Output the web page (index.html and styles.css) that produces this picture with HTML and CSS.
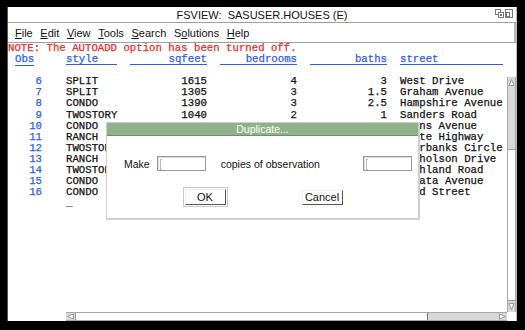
FILE: index.html
```html
<!DOCTYPE html>
<html lang="en">
<head>
    <meta charset="UTF-8">
    <title>FSVIEW: SASUSER.HOUSES (E)</title>
    <link rel="stylesheet" href="styles.css">
</head>
<body>
    <div class="window">
        <div class="titlebar">
            <span></span>
            <span class="title">FSVIEW:&nbsp; SASUSER.HOUSES (E)</span>
            <span class="win-btns">
                <svg width="9" height="9" viewBox="0 0 9 9"><rect x="0.5" y="0.5" width="5" height="5" fill="none" stroke="#777"/><rect x="3.5" y="3.5" width="5" height="5" fill="#fff" stroke="#777"/><rect x="5" y="5" width="2" height="2" fill="#777"/></svg>
                <svg width="8" height="9" viewBox="0 0 8 9"><rect x="0.5" y="0.5" width="7" height="8" fill="none" stroke="#777"/><rect x="1.5" y="3.5" width="3" height="4" fill="none" stroke="#777"/></svg>
            </span>
        </div>
        <div class="menubar">
            <span><u>F</u>ile</span>
            <span><u>E</u>dit</span>
            <span><u>V</u>iew</span>
            <span><u>T</u>ools</span>
            <span><u>S</u>earch</span>
            <span>S<u>o</u>lutions</span>
            <span><u>H</u>elp</span>
        </div>
        <div class="content">
            <div class="main">
                <div class="sheet">
                    <div class="note">NOTE: The AUTOADD option has been turned off.</div>
                    <div class="grid">
                        <div class="hd obs-hd"><span>Obs</span></div>
                        <div class="hd col">style</div>
                        <div class="hd col num">sqfeet</div>
                        <div class="hd col num">bedrooms</div>
                        <div class="hd col num">baths</div>
                        <div class="hd col">street</div>

                        <div class="blank"></div>

                        <div class="obs">6</div><div>SPLIT</div><div class="num">1615</div><div class="num">4</div><div class="num">3</div><div>West Drive</div>
                        <div class="obs">7</div><div>SPLIT</div><div class="num">1305</div><div class="num">3</div><div class="num">1.5</div><div>Graham Avenue</div>
                        <div class="obs">8</div><div>CONDO</div><div class="num">1390</div><div class="num">3</div><div class="num">2.5</div><div>Hampshire Avenue</div>
                        <div class="obs">9</div><div>TWOSTORY</div><div class="num">1040</div><div class="num">2</div><div class="num">1</div><div>Sanders Road</div>
                        <div class="obs">10</div><div>CONDO</div><div class="num">2105</div><div class="num">4</div><div class="num">2.5</div><div>Jeans Avenue</div>
                        <div class="obs">11</div><div>RANCH</div><div class="num">1535</div><div class="num">3</div><div class="num">3</div><div>State Highway</div>
                        <div class="obs">12</div><div>TWOSTORY</div><div class="num">1240</div><div class="num">2</div><div class="num">2</div><div>Fairbanks Circle</div>
                        <div class="obs">13</div><div>RANCH</div><div class="num">720</div><div class="num">1</div><div class="num">1</div><div>Nicholson Drive</div>
                        <div class="obs">14</div><div>TWOSTORY</div><div class="num">1745</div><div class="num">4</div><div class="num">2.5</div><div>Highland Road</div>
                        <div class="obs">15</div><div>CONDO</div><div class="num">1860</div><div class="num">2</div><div class="num">2</div><div>Arcata Avenue</div>
                        <div class="obs">16</div><div>CONDO</div><div class="num">1200</div><div class="num">1</div><div class="num">1</div><div>Rand Street</div>

                        <div class="obs"></div><div class="cursor">_</div>
                    </div>
                </div>
                <div class="vscroll">
                    <div class="arrow"><svg width="7" height="9" viewBox="0 0 7 9"><path d="M3.5 1.5 L6 7.5 L1 7.5 Z" fill="#fff" stroke="#999"/></svg></div>
                    <div class="v-track"><div class="v-thumb"></div></div>
                    <div class="arrow"><svg width="7" height="9" viewBox="0 0 7 9"><path d="M1 1.5 L6 1.5 L3.5 7.5 Z" fill="#fff" stroke="#999"/></svg></div>
                </div>
            </div>
            <div class="hscroll-row">
                <div class="hscroll">
                    <div class="arrow"><svg width="9" height="7" viewBox="0 0 9 7"><path d="M1.5 3.5 L7.5 1 L7.5 6 Z" fill="#fff" stroke="#999"/></svg></div>
                    <div class="h-thumb"></div>
                    <div class="h-track"></div>
                    <div class="arrow"><svg width="9" height="7" viewBox="0 0 9 7"><path d="M1.5 1 L7.5 3.5 L1.5 6 Z" fill="#fff" stroke="#999"/></svg></div>
                </div>
                <div class="corner"></div>
            </div>
        </div>

        <div class="dialog">
            <div class="dlg-title">Duplicate...</div>
            <div class="dlg-row">
                <span class="lbl-make">Make</span>
                <span class="field"><i></i></span>
                <span class="lbl-copies">copies of observation</span>
                <span class="field"><i></i></span>
            </div>
            <div class="dlg-buttons">
                <span class="default-ring"><button class="btn btn-ok">OK</button></span>
                <button class="btn btn-cancel">Cancel</button>
            </div>
        </div>
    </div>
</body>
</html>
```

FILE: styles.css
```css
body { margin: 0; background: #000; width: 525px; height: 330px; overflow: hidden; font-family: "Liberation Sans", Arial, sans-serif; }
.window { position: relative; margin: 7px 0 0 8px; width: 508px; height: 314px; background: #fff; display: flex; flex-direction: column; box-shadow: -1px 0 0 #555, 1px 0 0 #bbb; }

.titlebar { height: 15px; border-bottom: 1px solid #a0a0a0; display: grid; grid-template-columns: 1fr auto 1fr; align-items: center; font-size: 11px; color: #111; }
.win-btns { justify-self: end; display: flex; gap: 1px; margin-right: 3px; margin-top: -3px; }
.win-btns svg { display: block; }

.menubar { height: 19px; border-bottom: 1px solid #a0a0a0; display: flex; align-items: center; gap: 7.6px; padding-left: 7px; font-size: 11px; color: #111; box-shadow: inset -2px 0 0 #b8b8b8; }
.menubar u { text-decoration: underline; text-underline-offset: 1px; }

.content { flex: 1; display: flex; flex-direction: column; min-height: 0; }
.main { flex: 1; display: flex; min-height: 0; }
.sheet { flex: 1; font-family: "Liberation Mono", "Courier New", monospace; font-size: 10.7px; line-height: 11.1px; color: #111; -webkit-text-stroke: 0.25px; }
.note { color: #f02a2a; height: 11.1px; white-space: pre; }

.grid { display: grid; grid-template-columns: 38px 51px 77px 77px 77px 103px; grid-auto-rows: 11.1px; column-gap: 13px; padding-left: 7px; white-space: pre; }
.grid .num { text-align: right; }
.hd { color: #2f5be8; }
.hd.col { border-bottom: 1px solid #2f5be8; box-sizing: border-box; }
.obs-hd span { border-bottom: 1px solid #2f5be8; }
.obs { color: #2f5be8; text-align: right; padding-right: 11px; }
.blank { grid-column: 1 / -1; }
.cursor { color: #777; }

.vscroll { width: 9px; margin-top: 34px; box-sizing: border-box; border-left: 1px solid #a8a8a8; border-right: 1px solid #a8a8a8; background: #d8d8d8; display: flex; flex-direction: column; }
.vscroll .arrow { height: 11px; display: flex; align-items: center; justify-content: center; }
.v-track { flex: 1; display: flex; flex-direction: column; justify-content: flex-end; }
.v-thumb { height: 150px; background: #fff; border-top: 1px solid #999; border-bottom: 1px solid #999; }

.hscroll-row { height: 9px; display: flex; padding-left: 58px; }
.hscroll { flex: 1; display: flex; box-sizing: border-box; border-top: 1px solid #a8a8a8; border-bottom: 1px solid #a8a8a8; background: #d8d8d8; }
.hscroll .arrow { width: 9px; display: flex; align-items: center; justify-content: center; }
.h-thumb { width: 351px; background: #fff; border-left: 1px solid #999; border-right: 1px solid #777; }
.h-track { flex: 1; }
.corner { width: 9px; background: #fff; }

.dialog { position: absolute; left: 98px; top: 115px; width: 314px; height: 98px; box-sizing: border-box; background: #fff; border: 1px solid #cfcfcf; border-width: 1px 2px 2px 1px; }
.dlg-title { height: 12px; background: #8fb28a; color: #fff; font-size: 10.5px; line-height: 12px; text-align: center; border-bottom: 1px solid #6f8f6a; }
.dlg-row { display: flex; align-items: center; margin-top: 20px; padding-left: 17px; font-size: 10.5px; color: #111; }
.field { width: 49px; height: 15px; box-sizing: border-box; border: 1px solid #999; box-shadow: inset 1px 1px 0 #ddd; position: relative; }
.field i { position: absolute; left: 2px; top: 2px; width: 1px; height: 9px; border: 1px solid #bbb; border-right: none; }
.lbl-make { margin-right: 7px; }
.lbl-copies { margin-left: 15px; margin-right: 43px; }

.dlg-buttons { display: flex; justify-content: center; align-items: center; gap: 74px; margin-top: 16px; }
.default-ring { display: block; padding: 1px; border: 1px solid #c8c8c8; }
.btn { display: block; font-family: "Liberation Sans", Arial, sans-serif; font-size: 11px; color: #111; background: #fff; border: 1px solid; border-color: #eee #555 #555 #eee; padding: 0; }
.btn-ok { width: 41px; height: 16px; }
.btn-cancel { width: 41px; height: 15px; }
```
